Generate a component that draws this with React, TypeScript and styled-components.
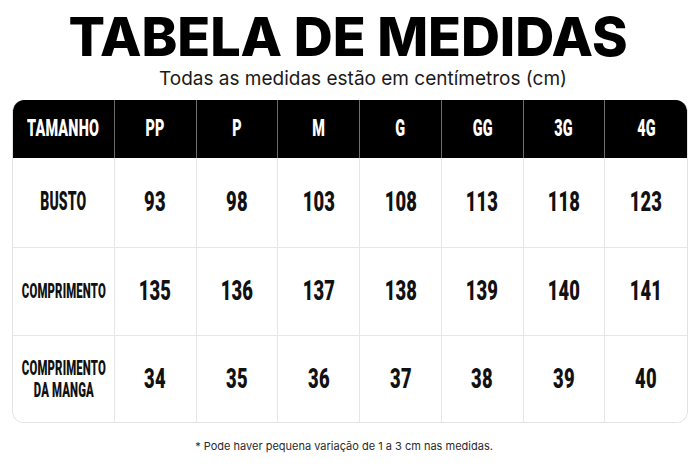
import React from "react";
import styled, { createGlobalStyle } from "styled-components";

const GlobalStyle = createGlobalStyle`
  html, body { margin: 0; padding: 0; background: #ffffff; }
  body { font-family: "Inter", "Liberation Sans", sans-serif; }
`;

const Page = styled.div`
  width: 700px;
  height: 467px;
  display: flex;
  flex-direction: column;
  align-items: center;
  box-sizing: border-box;
  padding-top: 10px;
  overflow: hidden;
`;

const Title = styled.h1`
  margin: 0 0 0 -4px;
  font-family: "Inter", sans-serif;
  font-weight: 800;
  font-size: 54px;
  line-height: 54px;
  color: #000;
  letter-spacing: -0.1px;
`;

const Subtitle = styled.p`
  margin: 5px 0 0 26px;
  font-family: "Inter", sans-serif;
  font-weight: 400;
  font-size: 19px;
  line-height: 19px;
  color: #1a1a1a;
`;

const Table = styled.div`
  margin-top: 12px;
  width: 676px;
  box-sizing: border-box;
  display: grid;
  grid-template-columns: 102px repeat(7, 1fr);
  grid-template-rows: 58px 90px 88px 86px;
  border: 1px solid #e3e3e3;
  border-top: none;
  border-radius: 12px;
  overflow: hidden;
`;

const HeadCell = styled.div<{ $last?: boolean }>`
  background: #000;
  color: #fff;
  display: flex;
  align-items: center;
  justify-content: center;
  border-right: ${(p) => (p.$last ? "none" : "1px solid #6d6d6d")};
  font-family: "Roboto", sans-serif;
  font-weight: 900;
`;

const BodyCell = styled.div<{ $last?: boolean; $bottom?: boolean }>`
  background: #fff;
  color: #111;
  display: flex;
  align-items: center;
  justify-content: center;
  text-align: center;
  border-right: ${(p) => (p.$last ? "none" : "1px solid #e6e6e6")};
  border-bottom: ${(p) => (p.$bottom ? "none" : "1px solid #e6e6e6")};
  font-family: "Roboto", sans-serif;
  font-weight: 900;
`;

const Squeeze = styled.span<{ $scale: number; $size: number }>`
  display: inline-block;
  font-size: ${(p) => p.$size}px;
  line-height: 1.05;
  transform: scaleX(${(p) => p.$scale});
  transform-origin: center;
  white-space: nowrap;
  letter-spacing: 0.3px;
`;

const Footnote = styled.p`
  margin: 18px 0 0 -12px;
  font-family: "Inter", sans-serif;
  font-size: 11px;
  line-height: 1;
  color: #2a2a2a;
`;

const sizes = ["PP", "P", "M", "G", "GG", "3G", "4G"];

type Row = { label: string[]; size: number; scale: number; values: number[] };

const rows: Row[] = [
  { label: ["BUSTO"], size: 25, scale: 0.56, values: [93, 98, 103, 108, 113, 118, 123] },
  { label: ["COMPRIMENTO"], size: 21, scale: 0.54, values: [135, 136, 137, 138, 139, 140, 141] },
  { label: ["COMPRIMENTO", "DA MANGA"], size: 21, scale: 0.54, values: [34, 35, 36, 37, 38, 39, 40] },
];

export default function App() {
  return (
    <>
      <GlobalStyle />
      <Page>
        <Title>TABELA DE MEDIDAS</Title>
        <Subtitle>Todas as medidas estão em centímetros (cm)</Subtitle>
        <Table>
          <HeadCell>
            <Squeeze $scale={0.6} $size={24}>TAMANHO</Squeeze>
          </HeadCell>
          {sizes.map((s, i) => (
            <HeadCell key={s} $last={i === sizes.length - 1}>
              <Squeeze $scale={0.6} $size={24}>{s}</Squeeze>
            </HeadCell>
          ))}
          {rows.map((r, ri) => (
            <React.Fragment key={ri}>
              <BodyCell $bottom={ri === rows.length - 1}>
                <Squeeze $scale={r.scale} $size={r.size}>
                  {r.label.map((l, li) => (
                    <React.Fragment key={li}>
                      {li > 0 && <br />}
                      {l}
                    </React.Fragment>
                  ))}
                </Squeeze>
              </BodyCell>
              {r.values.map((v, vi) => (
                <BodyCell key={vi} $last={vi === r.values.length - 1} $bottom={ri === rows.length - 1}>
                  <Squeeze $scale={0.68} $size={27}>{v}</Squeeze>
                </BodyCell>
              ))}
            </React.Fragment>
          ))}
        </Table>
        <Footnote>* Pode haver pequena variação de 1 a 3 cm nas medidas.</Footnote>
      </Page>
    </>
  );
}
